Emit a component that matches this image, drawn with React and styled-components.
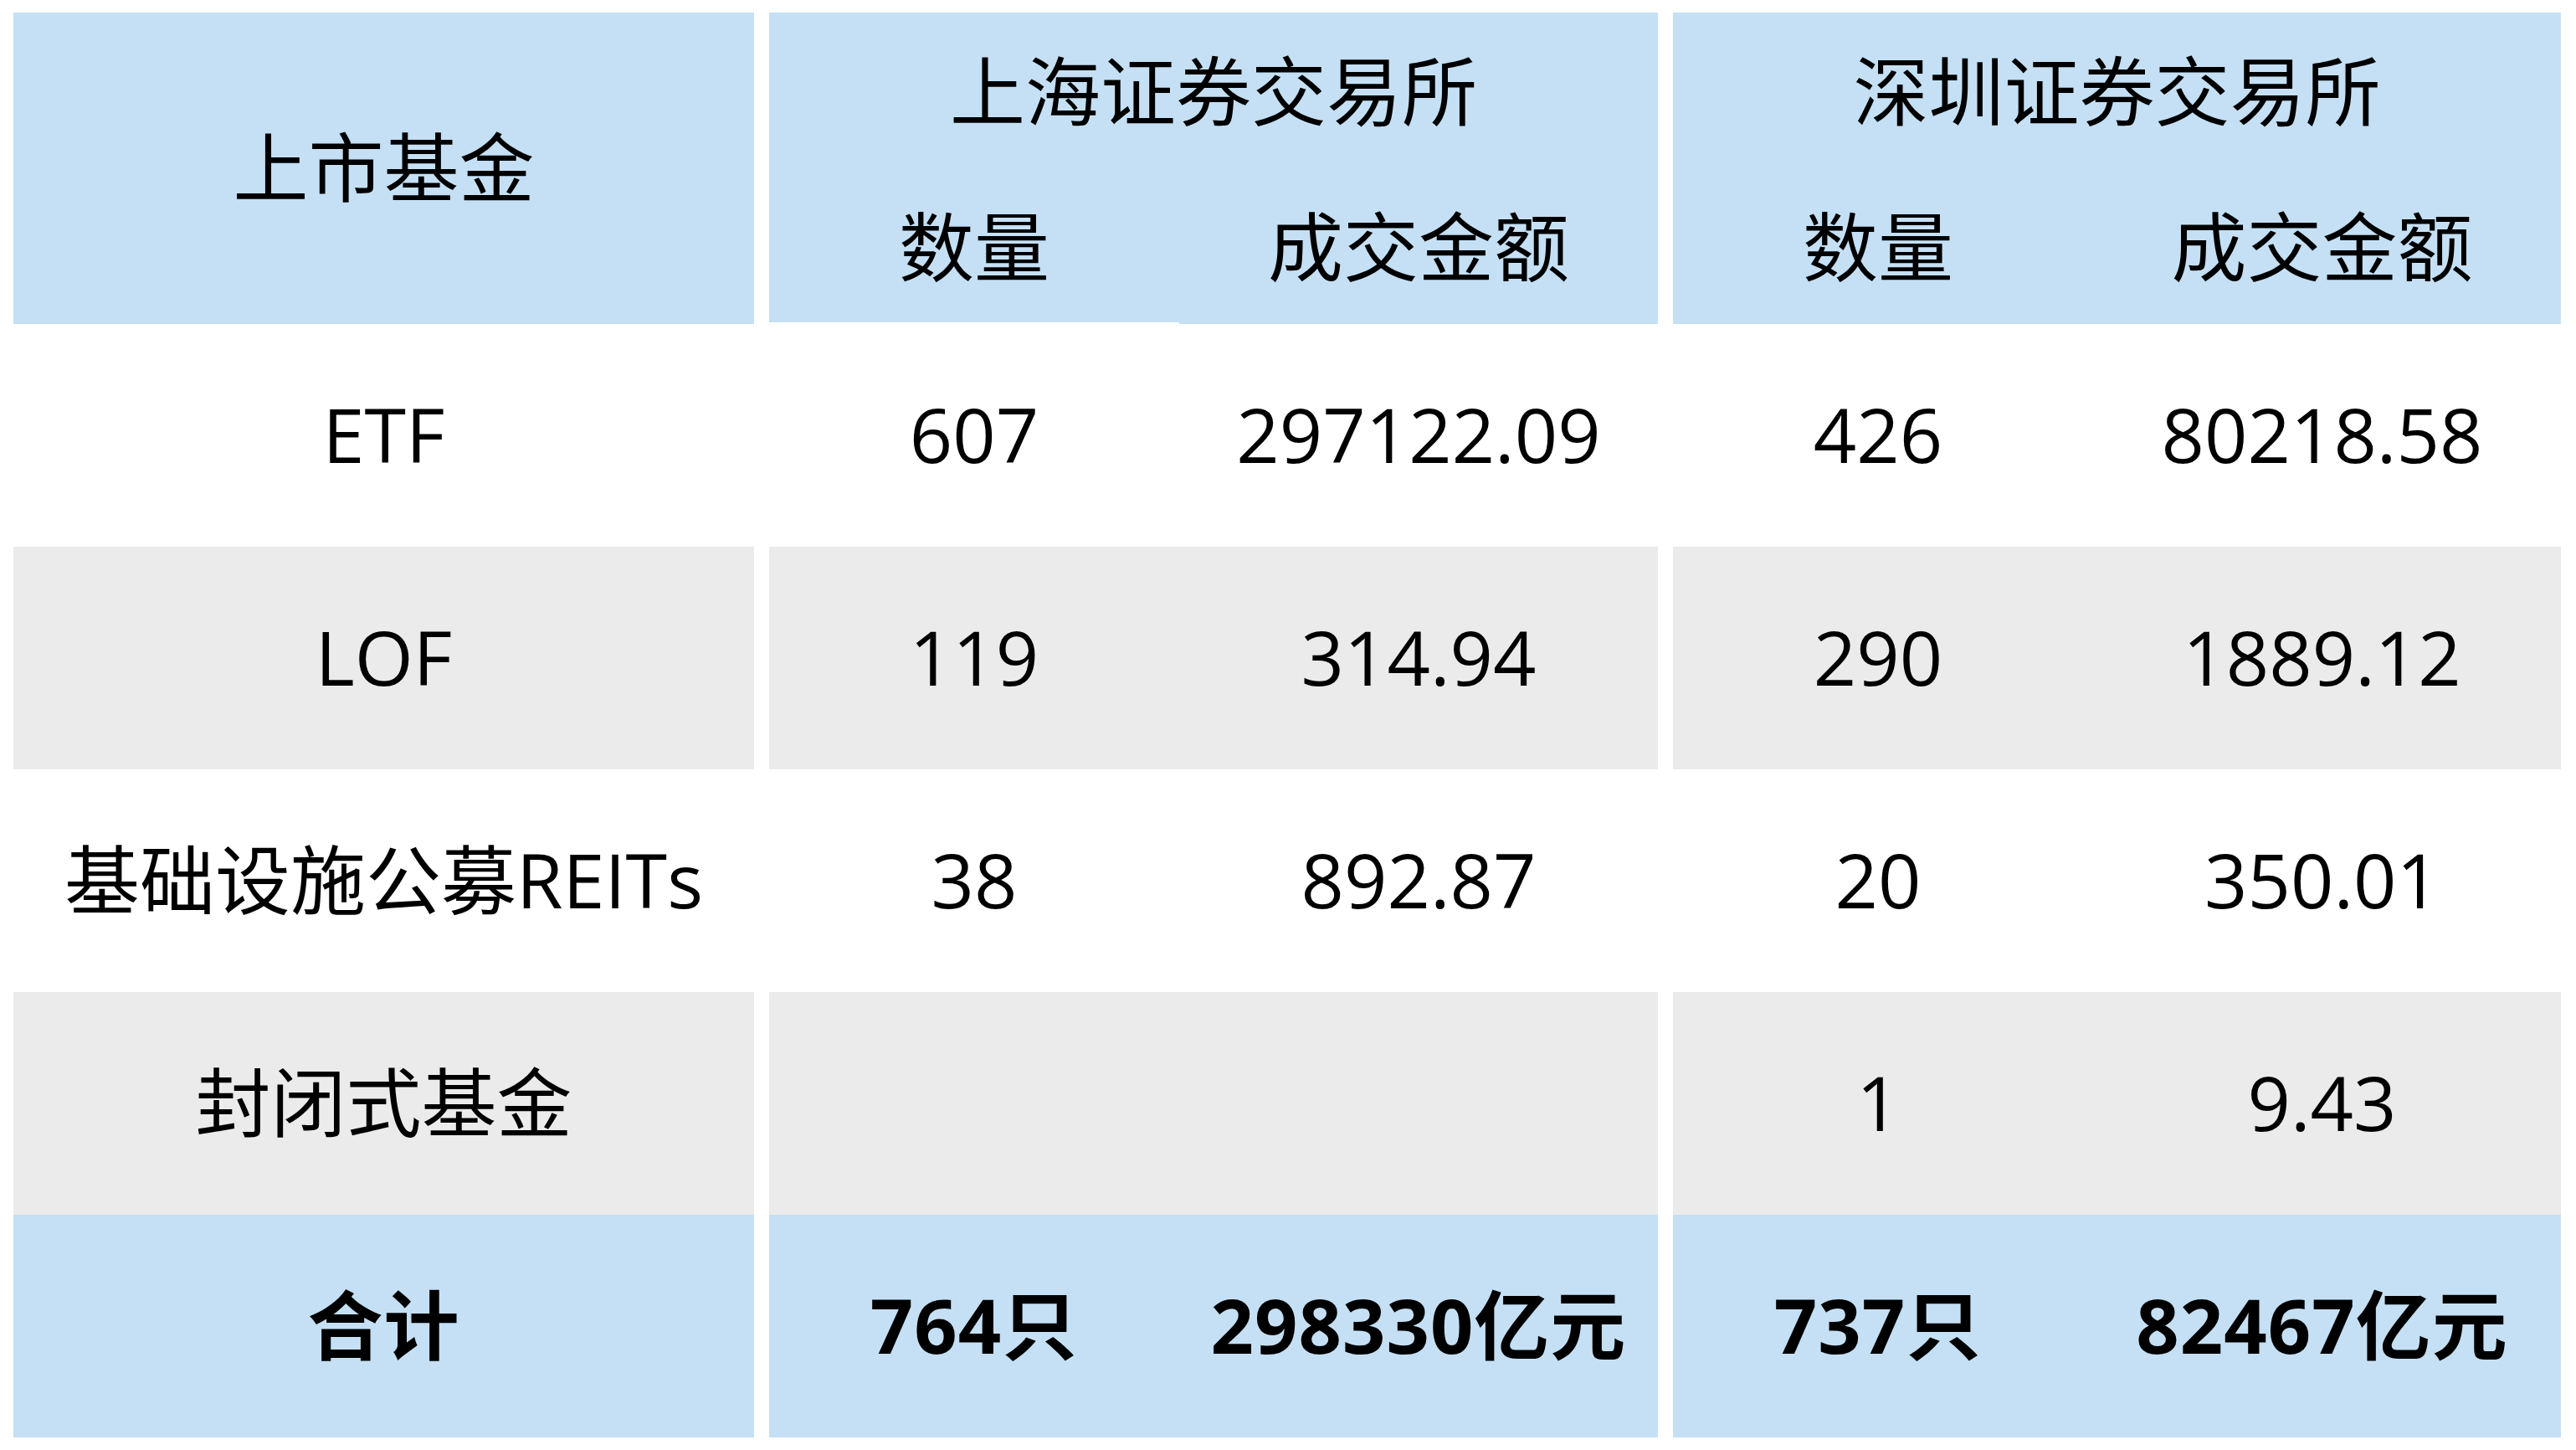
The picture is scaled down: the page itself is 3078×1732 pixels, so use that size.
import React from "react";
import styled, { createGlobalStyle } from "styled-components";

const GlobalStyle = createGlobalStyle`
  html, body {
    margin: 0;
    padding: 0;
    background: #ffffff;
  }
  body {
    font-family: "Open Sans", "Noto Sans CJK SC", sans-serif;
    color: #000000;
  }
`;

const BLUE = "#C5E0F4";
const GRAY = "#EBEBEB";

const rows = [
  { name: "ETF", tone: "white", sh: ["607", "297122.09"], sz: ["426", "80218.58"] },
  { name: "LOF", tone: "gray", sh: ["119", "314.94"], sz: ["290", "1889.12"] },
  { name: "基础设施公募REITs", tone: "white", sh: ["38", "892.87"], sz: ["20", "350.01"] },
  { name: "封闭式基金", tone: "gray", sh: ["", ""], sz: ["1", "9.43"] },
];

const total = { name: "合计", sh: ["764只", "298330亿元"], sz: ["737只", "82467亿元"] };

const toneColor = (tone) =>
  tone === "blue" ? BLUE : tone === "gray" ? GRAY : "#ffffff";

const Page = styled.div`
  width: 3078px;
  height: 1732px;
  box-sizing: border-box;
  padding: 15px 16px 15px 16px;
`;

const Table = styled.div`
  display: flex;
  flex-direction: column;
`;

const Row = styled.div`
  display: flex;
  gap: 18px;
  height: ${(p) => p.height}px;
`;

const Cell = styled.div`
  width: ${(p) => p.width}px;
  flex: none;
  box-sizing: border-box;
  padding-bottom: 5px;
  display: flex;
  align-items: center;
  justify-content: center;
  background: ${(p) => toneColor(p.tone)};
  font-size: 90px;
  font-weight: ${(p) => (p.bold ? 700 : 400)};
  letter-spacing: ${(p) => (p.bold ? 1 : 0)}px;
  line-height: 1;
  white-space: nowrap;
`;

const Pair = styled.div`
  display: flex;
  width: ${(p) => p.width}px;
  flex: none;
`;

const ExchangeHead = styled.div`
  display: flex;
  flex-direction: column;
  width: ${(p) => p.width}px;
  flex: none;
  background: ${BLUE};
`;

const ExchangeTitle = styled.div`
  height: 190px;
  box-sizing: border-box;
  padding-bottom: 4px;
  display: flex;
  align-items: center;
  justify-content: center;
  font-size: 90px;
  line-height: 1;
`;

const SubRow = styled.div`
  flex: 1;
  display: flex;
  background: #ffffff;
`;

const SubHead = styled.div`
  width: ${(p) => p.width}px;
  flex: none;
  box-sizing: border-box;
  padding-bottom: ${(p) => (p.short ? 2 : 4)}px;
  display: flex;
  align-items: center;
  justify-content: center;
  background: ${BLUE};
  font-size: 90px;
  line-height: 1;
  margin-bottom: ${(p) => (p.short ? 2 : 0)}px;
`;

const LABEL_W = 885;
const SH = [490, 572];
const SZ = [490, 571];

const DataPair = ({ widths, values, tone, bold }) => (
  <Pair width={widths[0] + widths[1]}>
    <Cell width={widths[0]} tone={tone} bold={bold}>{values[0]}</Cell>
    <Cell width={widths[1]} tone={tone} bold={bold}>{values[1]}</Cell>
  </Pair>
);

export default function App() {
  return (
    <Page>
      <GlobalStyle />
      <Table>
        <Row height={372}>
          <Cell width={LABEL_W} tone="blue">上市基金</Cell>
          <ExchangeHead width={SH[0] + SH[1]}>
            <ExchangeTitle>上海证券交易所</ExchangeTitle>
            <SubRow>
              <SubHead width={SH[0]} short>数量</SubHead>
              <SubHead width={SH[1]}>成交金额</SubHead>
            </SubRow>
          </ExchangeHead>
          <ExchangeHead width={SZ[0] + SZ[1]}>
            <ExchangeTitle>深圳证券交易所</ExchangeTitle>
            <SubRow>
              <SubHead width={SZ[0]}>数量</SubHead>
              <SubHead width={SZ[1]}>成交金额</SubHead>
            </SubRow>
          </ExchangeHead>
        </Row>

        {rows.map((r) => (
          <Row key={r.name} height={266}>
            <Cell width={LABEL_W} tone={r.tone}>{r.name}</Cell>
            <DataPair widths={SH} values={r.sh} tone={r.tone} />
            <DataPair widths={SZ} values={r.sz} tone={r.tone} />
          </Row>
        ))}

        <Row height={266}>
          <Cell width={LABEL_W} tone="blue" bold>{total.name}</Cell>
          <DataPair widths={SH} values={total.sh} tone="blue" bold />
          <DataPair widths={SZ} values={total.sz} tone="blue" bold />
        </Row>
      </Table>
    </Page>
  );
}
